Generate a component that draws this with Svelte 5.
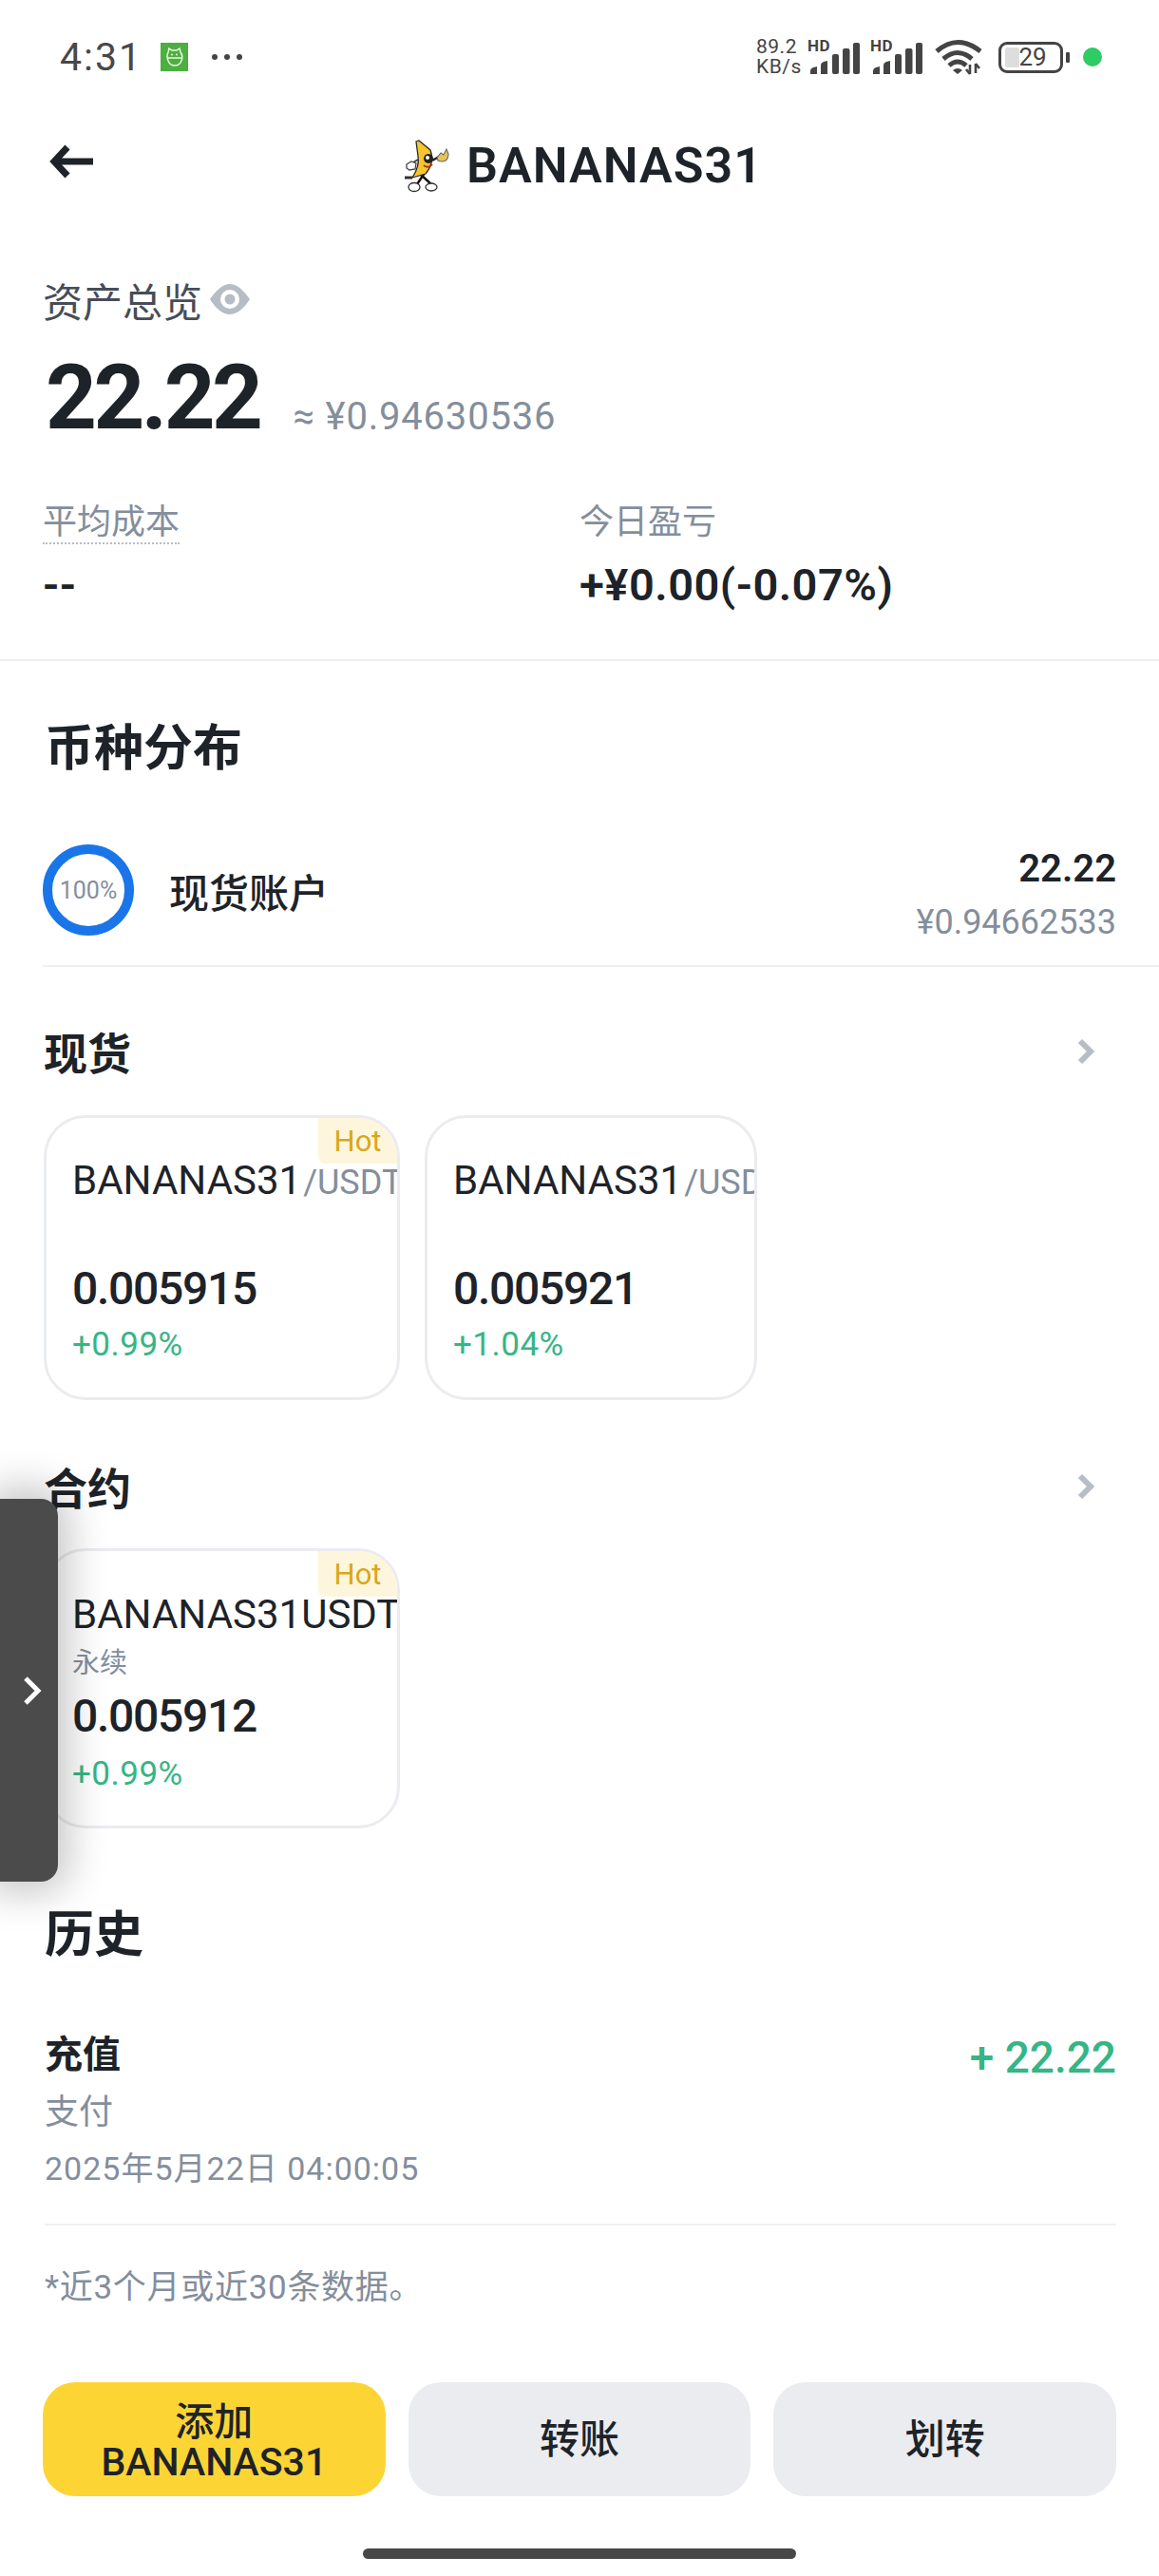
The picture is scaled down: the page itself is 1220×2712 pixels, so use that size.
<script>
  const spot = [
    { name: 'BANANAS31', quote: '/USDT', price: '0.005915', change: '+0.99%', hot: true, wide: true },
    { name: 'BANANAS31', quote: '/USDT', price: '0.005921', change: '+1.04%', hot: false, wide: false }
  ];
</script>

{#snippet signal()}
  <div class="signal">
    <span class="hd">HD</span>
    <svg width="52" height="33" viewBox="0 0 52 33">
      <path d="M0 33v-3q0-3 3-4l4-1v8z" fill="#444" />
      <path d="M11 33V24q0-3 3-4l4-1v14z" fill="#444" />
      <rect x="23" y="12" width="7" height="21" rx="2" fill="#444" />
      <rect x="34" y="6" width="7.5" height="27" rx="2" fill="#444" />
      <rect x="45" y="0" width="7" height="33" rx="2" fill="#444" />
    </svg>
  </div>
{/snippet}

{#snippet chevron()}
  <svg class="chev" width="20" height="28" viewBox="0 0 20 28">
    <path d="M4 3l11 11L4 25" fill="none" stroke="#b7bdc6" stroke-width="6" />
  </svg>
{/snippet}

<div class="page">
  <header class="status">
    <div class="status-left">
      <span class="time">4:31</span>
      <svg class="robot" width="29" height="30" viewBox="0 0 29 30">
        <rect width="29" height="30" fill="#4caf3f" />
        <path d="M8 10l1-4 3 2h5l3-2 1 4q3 4 1 9-2 5-7 5t-7-5q-2-5 0-9zM7 16h15" fill="none" stroke="#e9f7e5" stroke-width="1.5" />
        <circle cx="12" cy="12.5" r="1" fill="#e9f7e5" />
        <circle cx="17" cy="12.5" r="1" fill="#e9f7e5" />
      </svg>
      <div class="dots"><i></i><i></i><i></i></div>
    </div>
    <div class="status-right">
      <div class="speed"><span>89.2</span><span>KB/s</span></div>
      {@render signal()}
      {@render signal()}
      <svg class="wifi" width="50" height="38" viewBox="0 0 50 38">
        <path d="M2 13Q24-6 48 13" fill="none" stroke="#444" stroke-width="5" />
        <path d="M9 21Q24 8 39 21" fill="none" stroke="#444" stroke-width="5" />
        <path d="M15 28Q24 20 33 28" fill="none" stroke="#444" stroke-width="5" />
        <path d="M19 33q5-4 10 0l-5 4z" fill="#444" />
        <path d="M37 27v10M33 32l4 5M43 26v10M43 26l4 5" stroke="#444" stroke-width="2.6" fill="none" />
      </svg>
      <div class="battery">
        <div class="cell"><i></i><span>29</span></div>
        <b></b>
      </div>
      <span class="green-dot"></span>
    </div>
  </header>

  <nav class="nav">
    <svg class="back" width="46" height="36" viewBox="0 0 46 36">
      <path d="M19 3L5 18l14 15M6 18h40" fill="none" stroke="#1e2329" stroke-width="7" />
    </svg>
    <div class="title">
      <svg width="48" height="58" viewBox="0 0 48 58">
        <path d="M22 36l-8 12M17 37l12 11" stroke="#111" stroke-width="2.4" fill="none" />
        <path d="M13 3l3-1 12 10q5 13-5 25l-14 4q8-12 6-23-1-7-2-15z" fill="#f7c52d" stroke="#2a2a2a" stroke-width="1.3" />
        <circle cx="26" cy="21" r="5" fill="#222" />
        <circle cx="25" cy="20" r="2" fill="#fff" />
        <path d="M21 28q5 4 9-1" fill="none" stroke="#b3331d" stroke-width="2" />
        <path d="M30 23l7-4" stroke="#222" stroke-width="2.5" />
        <path d="M35 20l4-5 3 2 3-6 2 5q0 5-3 7t-8 0z" fill="#e9c25a" stroke="#666" stroke-width="1.1" />
        <path d="M15 22l-7 4" stroke="#333" stroke-width="1.6" />
        <path d="M3 27l5-3 5 2-1 6-6 1-3-2z" fill="#fff" stroke="#444" stroke-width="1.3" />
        <path d="M1 41l8 0" stroke="#333" stroke-width="3" />
        <ellipse cx="11" cy="51" rx="6" ry="4.5" fill="#fff" stroke="#333" stroke-width="1.3" />
        <ellipse cx="29" cy="51" rx="6" ry="4" fill="#fff" stroke="#333" stroke-width="1.3" />
      </svg>
      <h1>BANANAS31</h1>
    </div>
  </nav>

  <section class="overview">
    <div class="ov-label">
      <span>资产总览</span>
      <svg width="44" height="34" viewBox="0 0 44 34">
        <path d="M1 17Q12 1 22 1t21 16Q33 33 22 33T1 17z" fill="#b7bdc6" />
        <circle cx="22" cy="17" r="10" fill="#fff" />
        <circle cx="22" cy="17" r="5.5" fill="#b7bdc6" />
      </svg>
    </div>
    <div class="ov-main">
      <span class="big">22.22</span>
      <span class="approx">≈ ¥0.94630536</span>
    </div>
    <div class="stats">
      <div class="stat">
        <span class="stat-label dotted">平均成本</span>
        <span class="stat-value">--</span>
      </div>
      <div class="stat">
        <span class="stat-label">今日盈亏</span>
        <span class="stat-value">+¥0.00(-0.07%)</span>
      </div>
    </div>
  </section>

  <section class="dist">
    <h2 class="h-lg">币种分布</h2>
    <div class="acct">
      <div class="ring">100%</div>
      <span class="acct-name">现货账户</span>
      <div class="acct-num">
        <strong>22.22</strong>
        <span>¥0.94662533</span>
      </div>
    </div>
  </section>

  <section class="market spot">
    <div class="m-head"><h2 class="h-md">现货</h2>{@render chevron()}</div>
    <div class="cards">
      {#each spot as c}
        <div class="card" class:wide={c.wide}>
          {#if c.hot}<span class="hot">Hot</span>{/if}
          <div class="pair"><span class="sym">{c.name}</span><span class="quote">{c.quote}</span></div>
          <div class="price">{c.price}</div>
          <div class="chg">{c.change}</div>
        </div>
      {/each}
    </div>
  </section>

  <section class="market fut">
    <div class="m-head"><h2 class="h-md">合约</h2>{@render chevron()}</div>
    <div class="cards">
      <div class="card wide perp">
        <span class="hot">Hot</span>
        <div class="pair"><span class="sym">BANANAS31USDT</span></div>
        <div class="perp-tag">永续</div>
        <div class="price">0.005912</div>
        <div class="chg">+0.99%</div>
      </div>
    </div>
  </section>

  <section class="history">
    <h2 class="h-lg">历史</h2>
    <div class="tx">
      <div class="tx-left">
        <strong>充值</strong>
        <span class="pay">支付</span>
        <span class="date">2025年5月22日 04:00:05</span>
      </div>
      <span class="tx-amt">+ 22.22</span>
    </div>
    <p class="note">*近3个月或近30条数据。</p>
  </section>

  <div class="actions">
    <button class="primary">添加<br />BANANAS31</button>
    <button>转账</button>
    <button>划转</button>
  </div>

  <div class="home-bar"></div>

  <div class="handle">
    <svg width="20" height="32" viewBox="0 0 20 32">
      <path d="M3 3l13 13L3 29" fill="none" stroke="#fff" stroke-width="5" />
    </svg>
  </div>
</div>

<style>
  :global(body) { margin: 0; background: #fff; }
  .page {
    position: relative;
    width: 1220px;
    height: 2712px;
    overflow: hidden;
    background: #fff;
    color: #1e2329;
    font-family: Roboto, "Noto Sans CJK SC", sans-serif;
  }
  h1, h2, p { margin: 0; }

  .status { height: 120px; display: flex; justify-content: space-between; align-items: center; padding: 0 60px 0 63px; color: #444; }
  .status-left { display: flex; align-items: center; }
  .time { font-size: 41px; line-height: 48px; letter-spacing: 2px; color: #484848; width: 106px; }
  .robot { margin-right: 25px; }
  .dots { display: flex; gap: 7px; }
  .dots i { width: 6px; height: 6px; border-radius: 50%; background: #444; }
  .status-right { display: flex; align-items: center; }
  .speed { display: flex; flex-direction: column; font-size: 21px; line-height: 21px; width: 54px; letter-spacing: .5px; }
  .signal { position: relative; width: 66px; height: 36px; }
  .signal svg { position: absolute; left: 3px; bottom: 0; }
  .hd { position: absolute; left: 0; top: -3px; font-size: 17px; line-height: 18px; font-weight: 700; letter-spacing: .5px; }
  .wifi { margin-left: 2px; margin-right: 17px; }
  .battery { display: flex; align-items: center; gap: 3px; margin-right: 14px; }
  .cell { position: relative; box-sizing: border-box; width: 68px; height: 33px; border: 3.5px solid #444; border-radius: 9px; display: flex; align-items: center; justify-content: center; font-size: 26px; line-height: 26px; }
  .cell i { position: absolute; left: 4px; top: 3px; bottom: 3px; width: 15px; background: #ddd; border-radius: 2px; }
  .cell span { position: relative; left: 2px; }
  .battery b { width: 4px; height: 11px; background: #444; border-radius: 1px; }
  .green-dot { width: 20px; height: 20px; border-radius: 50%; background: #2fcb63; }

  .nav { height: 110px; position: relative; display: flex; align-items: center; justify-content: center; padding-left: 8px; box-sizing: border-box; }
  .back { position: absolute; left: 52px; top: 32px; }
  .title { display: flex; align-items: center; gap: 18px; }
  .title h1 { font-size: 52px; line-height: 60px; font-weight: 600; letter-spacing: 1px; }

  .overview { padding: 60px 45px 0; height: 466px; box-sizing: border-box; border-bottom: 2px solid #eff0f2; }
  .ov-label { display: flex; align-items: center; gap: 7px; height: 50px; font-size: 42px; color: #474d57; }
  .ov-main { display: flex; align-items: baseline; gap: 35px; margin-top: 29px; height: 100px; }
  .big { font-size: 94px; line-height: 100px; font-weight: 700; padding-left: 3px; letter-spacing: -3.5px; }
  .approx { font-size: 40px; color: #848e9c; letter-spacing: .8px; position: relative; top: 1px; }
  .stats { display: flex; margin-top: 61px; }
  .stat { width: 567px; display: flex; flex-direction: column; align-items: flex-start; }
  .stat-label { font-size: 36px; line-height: 40px; color: #848e9c; }
  .dotted { border-bottom: 2px dotted #b7bdc6; height: 41px; }
  .stat-value { font-size: 47px; line-height: 60px; font-weight: 600; margin-top: 16px; letter-spacing: .5px; }
  .dotted + .stat-value { margin-top: 13px; }

  .dist { height: 322px; box-sizing: border-box; padding-top: 58px; }
  .h-lg { font-size: 52px; line-height: 70px; font-weight: 600; padding-left: 47px; }
  .acct { display: flex; align-items: center; margin-left: 45px; padding-right: 45px; height: 194px; box-sizing: border-box; padding-top: 34px; border-bottom: 2px solid #eff0f2; }
  .ring { box-sizing: border-box; width: 96px; height: 96px; border: 10px solid #1a76e8; border-radius: 50%; display: flex; align-items: center; justify-content: center; font-size: 25px; color: #848e9c; flex: none; }
  .acct-name { margin-left: 37px; font-size: 42px; font-weight: 500; flex: 1; }
  .acct-num { display: flex; flex-direction: column; align-items: flex-end; margin-top: 12px; }
  .acct-num strong { font-size: 40px; line-height: 56px; font-weight: 600; }
  .acct-num span { font-size: 36px; line-height: 56px; color: #848e9c; }

  .market { padding: 0 45px 0 46px; }
  .m-head { display: flex; justify-content: space-between; align-items: center; height: 60px; padding-right: 22px; }
  .chev { margin-bottom: 6px; }
  .h-md { font-size: 46px; line-height: 60px; font-weight: 600; }
  .spot { margin-top: 62px; }
  .fut { margin-top: 64px; }
  .cards { display: flex; gap: 26px; margin-top: 34px; }
  .fut .cards { margin-top: 32px; }
  .card { position: relative; box-sizing: border-box; width: 350px; height: 300px; border: 3px solid #eaecef; border-radius: 44px; overflow: hidden; padding: 41px 0 0 27px; }
  .card.wide { width: 375px; }
  .hot { position: absolute; right: 0; top: 0; width: 83px; height: 48px; background: #fdf6dd; color: #d9a71a; font-size: 31px; line-height: 50px; text-align: center; border-bottom-left-radius: 8px; }
  .pair { white-space: nowrap; display: flex; align-items: baseline; height: 50px; }
  .sym { font-size: 42px; line-height: 50px; }
  .quote { font-size: 36px; color: #848e9c; margin-left: 2px; }
  .price { font-size: 48px; line-height: 60px; font-weight: 500; letter-spacing: -1.3px; margin-top: 59px; }
  .chg { font-size: 35px; line-height: 44px; color: #36b585; margin-top: 7px; letter-spacing: .5px; }
  .perp { padding-top: 42px; height: 295px; }
  .perp-tag { font-size: 29px; line-height: 40px; color: #848e9c; margin-top: 6px; }
  .perp .price { margin-top: 6px; }
  .perp .chg { margin-top: 9px; }

  .history { padding: 0 45px 0 47px; margin-top: 78px; }
  .history .h-lg { padding-left: 0; }
  .tx { display: flex; justify-content: space-between; margin-top: 63px; height: 205px; border-bottom: 2px solid #eff0f2; }
  .tx-left { display: flex; flex-direction: column; }
  .tx-left strong { font-size: 40px; line-height: 56px; font-weight: 600; }
  .pay { font-size: 36px; line-height: 60px; color: #848e9c; margin-top: 2px; }
  .date { font-size: 34px; line-height: 56px; color: #848e9c; letter-spacing: 1px; margin-top: 1px; }
  .tx-amt { font-size: 46px; line-height: 60px; font-weight: 500; color: #36b585; }
  .note { font-size: 35px; line-height: 50px; color: #848e9c; margin-top: 41px; letter-spacing: .7px; }

  .actions { display: grid; grid-template-columns: repeat(3, 1fr); gap: 24px; padding: 0 45px; margin-top: 74px; height: 120px; }
  .actions button { border: 0; border-radius: 34px; background: #eaecef; color: #1e2329; font: 500 42px/50px Roboto, "Noto Sans CJK SC", sans-serif; padding: 2px 0 0; }
  .actions .primary { background: #fcd535; font-size: 41px; line-height: 42px; padding-top: 6px; }

  .home-bar { width: 456px; height: 11px; border-radius: 6px; background: #484848; margin: 55px auto 0; }

  .handle { position: absolute; left: 0; top: 1578px; width: 61px; height: 403px; background: #4b4b4b; border-radius: 0 18px 18px 0; box-shadow: 0 0 40px 12px rgba(0,0,0,.22); display: flex; align-items: center; justify-content: flex-end; padding-right: 17px; box-sizing: border-box; }
</style>
